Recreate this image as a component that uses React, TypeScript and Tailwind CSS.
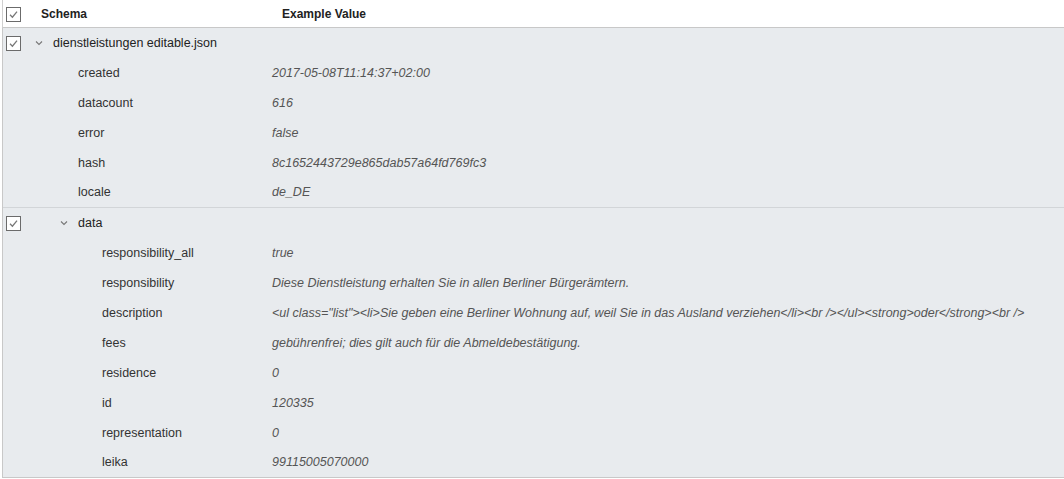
import React from 'react';

type Row = { label: string; value: string };

const rootFields: Row[] = [
  { label: 'created', value: '2017-05-08T11:14:37+02:00' },
  { label: 'datacount', value: '616' },
  { label: 'error', value: 'false' },
  { label: 'hash', value: '8c1652443729e865dab57a64fd769fc3' },
  { label: 'locale', value: 'de_DE' },
];

const dataFields: Row[] = [
  { label: 'responsibility_all', value: 'true' },
  { label: 'responsibility', value: 'Diese Dienstleistung erhalten Sie in allen Berliner Bürgerämtern.' },
  {
    label: 'description',
    value:
      '<ul class="list"><li>Sie geben eine Berliner Wohnung auf, weil Sie in das Ausland verziehen</li><br /></ul><strong>oder</strong><br />',
  },
  { label: 'fees', value: 'gebührenfrei; dies gilt auch für die Abmeldebestätigung.' },
  { label: 'residence', value: '0' },
  { label: 'id', value: '120335' },
  { label: 'representation', value: '0' },
  { label: 'leika', value: '99115005070000' },
];

const Check: React.FC = () => (
  <div className="w-[15px] h-[15px] border border-[#6b6b6b] bg-white flex items-center justify-center shrink-0">
    <svg width="11" height="11" viewBox="0 0 11 11" fill="none">
      <path d="M2 5.8 L4.4 8.2 L9 2.6" stroke="#777" strokeWidth="1.3" />
    </svg>
  </div>
);

const Chevron: React.FC = () => (
  <svg width="8" height="6" viewBox="0 0 8 6" fill="none" className="shrink-0">
    <path d="M1 1.5 L4 4.5 L7 1.5" stroke="#777" strokeWidth="1.1" />
  </svg>
);

const FieldRow: React.FC<{ row: Row; deep?: boolean; short?: boolean }> = ({ row, deep, short }) => (
  <div className={`flex items-center ${short ? 'h-[29px] pb-[1px]' : 'h-[30px]'}`}>
    <div className={`${deep ? 'pl-[99px]' : 'pl-[75px]'} w-[269px] shrink-0 text-[#333]`}>{row.label}</div>
    <div className="italic text-[#555] whitespace-nowrap">{row.value}</div>
  </div>
);

export default function App() {
  return (
    <div className="w-[1064px] h-[479px] bg-white text-[12.5px]" style={{ fontFamily: '"Liberation Sans", Arial, sans-serif' }}>
      {/* Header */}
      <div className="flex items-center h-[28px] pt-[1px] border-b border-[#c8c8c8] border-l border-l-[#d0d0d0] ml-[2px]">
        <div className="pl-[3px] w-[38px]">
          <Check />
        </div>
        <div className="w-[241px] font-bold text-[12px] text-[#222]">Schema</div>
        <div className="font-bold text-[12px] text-[#222]">Example Value</div>
      </div>

      <div className="ml-[2px] bg-[#e8ebee] border-l border-b border-[#c8c8c8]">
        {/* root section */}
        <div className="border-b border-[#d2d5d8]">
          <div className="flex items-center h-[30px]">
            <div className="pl-[3px] w-[32px]">
              <Check />
            </div>
            <Chevron />
            <div className="ml-[10px] text-[#222]">dienstleistungen editable.json</div>
          </div>
          {rootFields.map((r, i) => (
            <FieldRow key={r.label} row={r} short={i === rootFields.length - 1} />
          ))}
        </div>

        {/* data section */}
        <div>
          <div className="flex items-center h-[30px]">
            <div className="pl-[3px] w-[57px]">
              <Check />
            </div>
            <Chevron />
            <div className="ml-[10px] text-[#222]">data</div>
          </div>
          {dataFields.map((r, i) => (
            <FieldRow key={r.label} row={r} deep short={i === dataFields.length - 1} />
          ))}
        </div>
      </div>
    </div>
  );
}
